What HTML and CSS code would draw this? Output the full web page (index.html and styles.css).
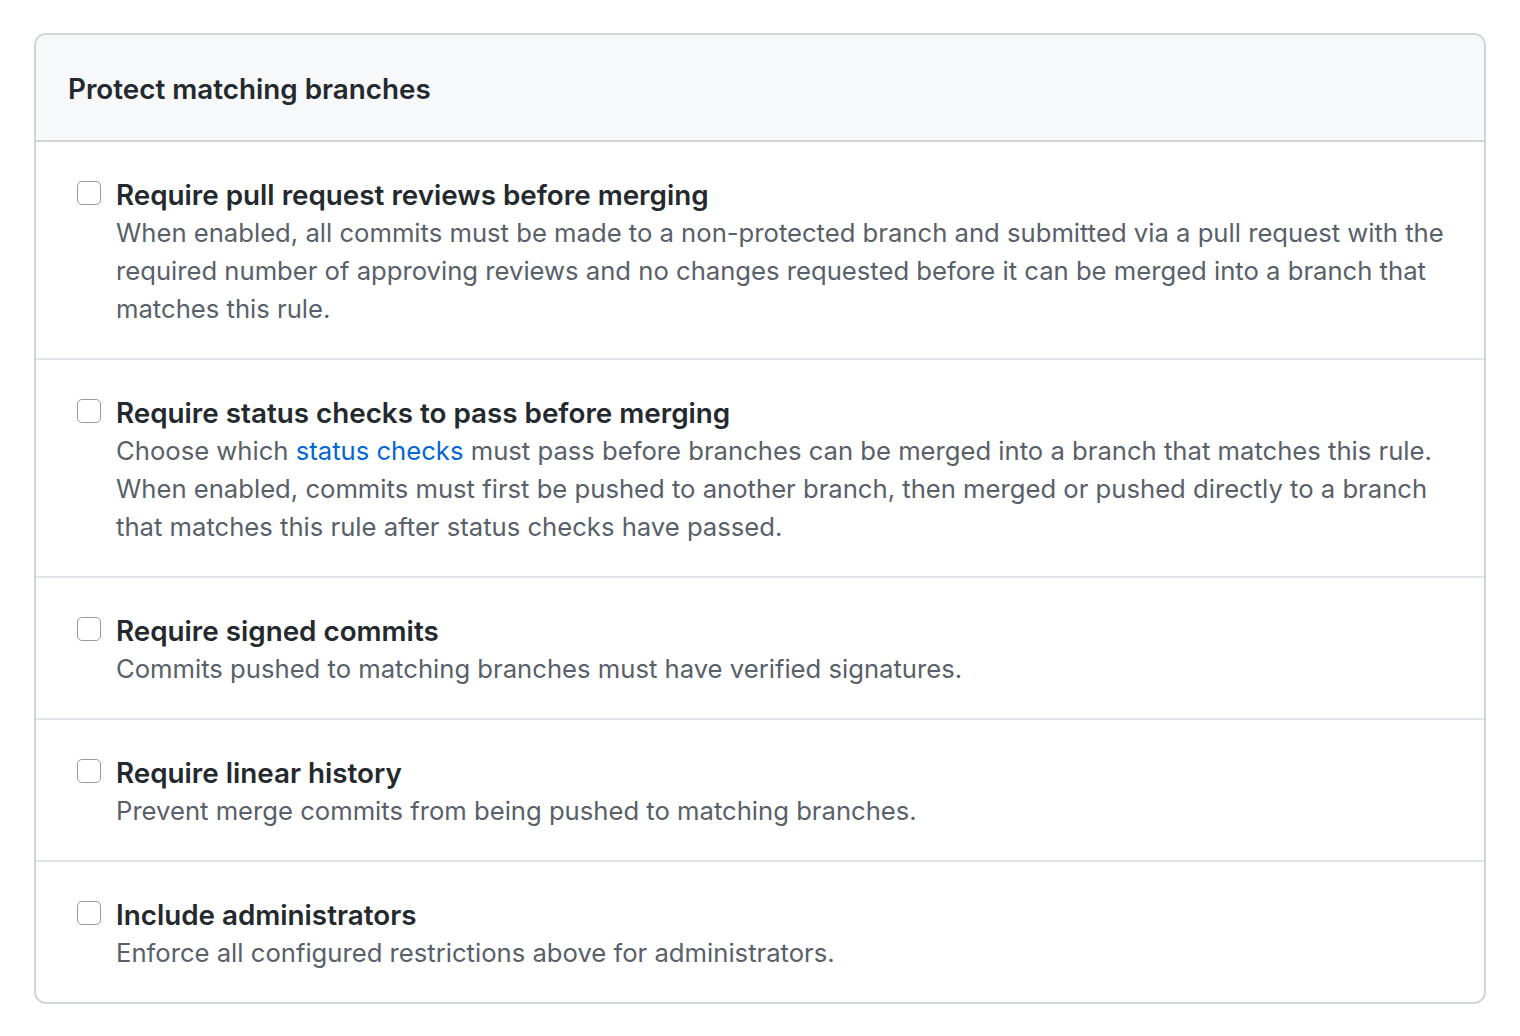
FILE: index.html
```html
<!DOCTYPE html>
<html>
<head>
<meta charset="utf-8">
<link rel="stylesheet" href="styles.css">
</head>
<body>
<div class="box">
  <div class="box-header">
    <h3 class="box-title">Protect matching branches</h3>
  </div>
  <div class="box-row">
    <span class="check"></span>
    <div class="row-body">
      <div class="row-title">Require pull request reviews before merging</div>
      <p class="note">When enabled, all commits must be made to a non-protected branch and submitted via a pull request with the required number of approving reviews and no changes requested before it can be merged into a branch that matches this rule.</p>
    </div>
  </div>
  <div class="box-row">
    <span class="check"></span>
    <div class="row-body">
      <div class="row-title">Require status checks to pass before merging</div>
      <p class="note">Choose which <a class="link" href="#">status checks</a> must pass before branches can be merged into a branch that matches this rule. When enabled, commits must first be pushed to another branch, then merged or pushed directly to a branch that matches this rule after status checks have passed.</p>
    </div>
  </div>
  <div class="box-row">
    <span class="check"></span>
    <div class="row-body">
      <div class="row-title">Require signed commits</div>
      <p class="note">Commits pushed to matching branches must have verified signatures.</p>
    </div>
  </div>
  <div class="box-row">
    <span class="check"></span>
    <div class="row-body">
      <div class="row-title">Require linear history</div>
      <p class="note">Prevent merge commits from being pushed to matching branches.</p>
    </div>
  </div>
  <div class="box-row">
    <span class="check"></span>
    <div class="row-body">
      <div class="row-title">Include administrators</div>
      <p class="note">Enforce all configured restrictions above for administrators.</p>
    </div>
  </div>
</div>
</body>
</html>
```
FILE: styles.css
```css
html, body {
  margin: 0;
  padding: 0;
  background: #ffffff;
}
body {
  padding: 33px 34px 0 34px;
  font-family: Inter, "Noto Sans", "Liberation Sans", sans-serif;
  color: #24292e;
}
.box {
  width: 1452px;
  box-sizing: border-box;
  border: 2px solid #d1d5da;
  border-radius: 12px;
  overflow: hidden;
}
.box-header {
  background: #f6f8fa;
  height: 107px;
  box-sizing: border-box;
  padding: 2px 32px 0 32px;
  display: flex;
  align-items: center;
  border-bottom: 2px solid #d1d5da;
}
.box-title {
  margin: 0;
  font-size: 27.8px;
  font-weight: 600;
  line-height: 38px;
  color: #24292e;
}
.box-row {
  display: flex;
  align-items: flex-start;
  padding: 34px 32px 30px 41px;
  border-top: 2px solid #e1e4e8;
}
.box-header + .box-row {
  border-top: none;
}
.check {
  flex: none;
  width: 24px;
  height: 24px;
  margin-top: 5px;
  border: 1.5px solid #9b9b9b;
  border-radius: 5px;
  background: #fff;
  box-sizing: border-box;
}
.row-body {
  margin-left: 15px;
}
.row-title {
  font-size: 27.8px;
  font-weight: 600;
  line-height: 38px;
  color: #24292e;
}
.note {
  margin: 0;
  font-size: 25.65px;
  line-height: 38px;
  color: #586069;
}
.link {
  color: #0366d6;
  text-decoration: none;
}
```
